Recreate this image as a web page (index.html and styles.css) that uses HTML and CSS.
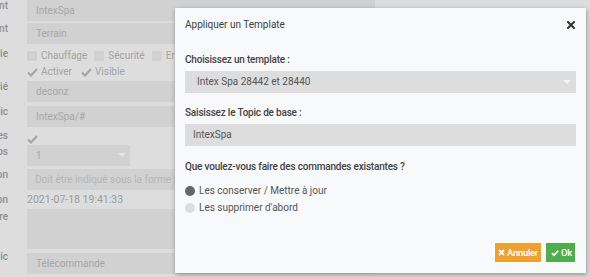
FILE: index.html
```html
<!DOCTYPE html>
<html lang="fr">
<head>
<meta charset="utf-8">
<link rel="stylesheet" href="styles.css">
</head>
<body>
<div class="page">
  <div class="row r-input first">
    <div class="label"><span>Nom de l'équipement</span></div>
    <div class="field input">IntexSpa</div>
  </div>
  <div class="row r-input">
    <div class="label"><span>Objet parent</span></div>
    <div class="field input">Terrain</div>
  </div>
  <div class="row r-check">
    <div class="label"><span>Catégorie</span></div>
    <div class="field checks">
      <span class="cb"></span><span class="cbt">Chauffage</span>
      <span class="cb"></span><span class="cbt">Sécurité</span>
      <span class="cb"></span><span class="cbt">Energie</span>
    </div>
  </div>
  <div class="row r-check2">
    <div class="label"><span></span></div>
    <div class="field checks">
      <svg class="ck" width="11" height="9" viewBox="0 0 11 9"><path d="M1 4.5 L4 7.5 L10 1" stroke="#a3a4a3" stroke-width="2" fill="none"/></svg><span class="cbt">Activer</span>
      <svg class="ck" width="11" height="9" viewBox="0 0 11 9"><path d="M1 4.5 L4 7.5 L10 1" stroke="#a3a4a3" stroke-width="2" fill="none"/></svg><span class="cbt">Visible</span>
    </div>
  </div>
  <div class="row r-input r5">
    <div class="label"><span>Broker associé</span></div>
    <div class="field input">deconz</div>
  </div>
  <div class="row r-input r6">
    <div class="label"><span>Topic</span></div>
    <div class="field input">IntexSpa/#</div>
  </div>
  <div class="row r-check3">
    <div class="label"><span>Auto-découverte des commandes</span></div>
    <div class="field checks"><svg class="ck" width="11" height="9" viewBox="0 0 11 9"><path d="M1 4.5 L4 7.5 L10 1" stroke="#a3a4a3" stroke-width="2" fill="none"/></svg></div>
  </div>
  <div class="row r-input r8">
    <div class="label"><span>Qos</span></div>
    <div class="field input select">1<span class="arrow"></span></div>
  </div>
  <div class="row r-input r9">
    <div class="label"><span>Format de publication</span></div>
    <div class="field input ph">Doit être indiqué sous la forme : JSON</div>
  </div>
  <div class="row r-date">
    <div class="label"><span>Dernière communication</span></div>
    <div class="field date">2021-07-18 19:41:33</div>
  </div>
  <div class="row r-area">
    <div class="label"><span>Commentaire</span></div>
    <div class="field area"></div>
  </div>
  <div class="row r-input r12">
    <div class="label"><span>Type de topic</span></div>
    <div class="field input">Télécommande</div>
  </div>
</div>

<div class="modal">
  <div class="m-head">
    <span class="m-title">Appliquer un Template</span>
    <svg class="m-close" width="8" height="8" viewBox="0 0 8 8"><path d="M1 1 L7 7 M7 1 L1 7" stroke="#333" stroke-width="2" stroke-linecap="square"/></svg>
  </div>
  <div class="m-body">
    <div class="m-label l1">Choisissez un template :</div>
    <div class="m-select">Intex Spa 28442 et 28440<span class="m-arrow"></span></div>
    <div class="m-label l2">Saisissez le Topic de base :</div>
    <div class="m-input">IntexSpa</div>
    <div class="m-label l3">Que voulez-vous faire des commandes existantes ?</div>
    <div class="radios">
      <div class="radio"><span class="dot on"></span>Les conserver / Mettre à jour</div>
      <div class="radio"><span class="dot"></span>Les supprimer d'abord</div>
    </div>
  </div>
  <div class="m-foot">
    <span class="btn warn"><svg width="7" height="7" viewBox="0 0 7 7"><path d="M1 1 L6 6 M6 1 L1 6" stroke="#fff" stroke-width="1.8"/></svg><span>Annuler</span></span>
    <span class="btn ok"><svg width="9" height="8" viewBox="0 0 9 8"><path d="M1 4.2 L3.4 6.5 L8 1.5" stroke="#fff" stroke-width="1.9" fill="none"/></svg><span>Ok</span></span>
  </div>
</div>
</body>
</html>
```

FILE: styles.css
```css
html, body {
  margin: 0;
  padding: 0;
}
body {
  width: 590px;
  height: 277px;
  overflow: hidden;
  background: #dcdddc;
  font-family: Roboto, "Liberation Sans", sans-serif;
  position: relative;
}
.page {
  display: flex;
  flex-direction: column;
  width: 375px;
}
.row {
  display: flex;
  align-items: flex-start;
}
.label {
  width: 8px;
  flex: none;
  display: flex;
  justify-content: flex-end;
  overflow: hidden;
  white-space: nowrap;
  font-size: 10px;
  line-height: 12px;
  color: #8e8f8e;
  margin-right: 19px;
  font-weight: 500;
}
.label span { flex: none; }
.field {
  flex: 1;
  font-size: 10px;
  color: #a6a7a6;
}
.input {
  height: 21px;
  line-height: 21px;
  background: #d1d1d1;
  padding-left: 9px;
  position: relative;
}
.r-input .label { margin-top: 0; }
.row + .r-input { margin-top: 2px; }
.r-check { margin-top: 5px; height: 14px; }
.r-check .label { margin-top: -1px; }
.r-check2 { margin-top: 2px; height: 14px; }
.checks {
  display: flex;
  align-items: center;
  height: 14px;
  line-height: 14px;
  color: #a3a4a3;
  font-size: 10px;
}
.cb {
  width: 10px;
  height: 10px;
  background: #d1d1d1;
  margin-right: 4px;
}
.cbt { margin-right: 7px; }
.ck {
  margin-right: 3px;
}
.r-check2 .cbt { margin-right: 9px; }
.r5 { margin-top: 2px !important; }
.r6 { margin-top: 4px !important; }
.r-check3 { margin-top: 5px; height: 12px; }
.r-check3 .label { margin-top: -2px; }
.r8 { margin-top: 1px !important; }
.r8 .label { margin-top: 1px !important; }
.select {
  flex: none;
  width: 94px;
  padding-left: 9px;
}
.arrow {
  position: absolute;
  left: 91px;
  top: 8px;
  border-left: 4px solid transparent;
  border-right: 4px solid transparent;
  border-top: 4px solid #e6e6e6;
}
.r9 { margin-top: 3px !important; }
.ph { color: #b6b7b6; padding-left: 8px; }
.r-date { margin-top: 2px; height: 16px; }
.date { line-height: 16px; color: #9a9b9a; padding-left: 0; font-size: 10.5px; }
.r-date .label { margin-top: 2px; }
.r-area { margin-top: 1px; }
.r-area .label { margin-top: 2px; }
.area { height: 40px; background: #d1d1d1; }
.r12 { margin-top: 4px !important; }
.r12 .label { margin-top: -2px !important; }

/* modal */
.modal {
  position: absolute;
  left: 175px;
  top: 8px;
  width: 411px;
  height: 265px;
  background: #f8f9fa;
  box-shadow: 0 1px 4px rgba(0,0,0,0.25), 2px 3px 6px rgba(0,0,0,0.12);
  display: flex;
  flex-direction: column;
  box-sizing: border-box;
  padding: 0 10px 10px 10px;
  color: #444;
}
.m-head {
  display: flex;
  justify-content: space-between;
  align-items: center;
  margin-top: 11px;
  height: 12px;
}
.m-title {
  font-size: 10px;
  line-height: 12px;
  color: #3e3e3e;
}
.m-close { margin-right: 1px; }
.m-body {
  display: flex;
  flex-direction: column;
}
.m-label {
  font-size: 10px;
  line-height: 12px;
  font-weight: 500;
  color: #444;
  letter-spacing: -0.2px;
}
.l1 { margin-top: 23px; margin-bottom: 5px; }
.l2 { margin-top: 14px; margin-bottom: 5px; }
.l3 { margin-top: 15px; }
.m-select, .m-input {
  height: 22px;
  line-height: 22px;
  background: #dddddd;
  font-size: 10px;
  color: #555;
  position: relative;
}
.m-select { padding-left: 12px; }
.m-input { padding-left: 8px; }
.m-arrow {
  position: absolute;
  right: 5px;
  top: 9px;
  border-left: 4px solid transparent;
  border-right: 4px solid transparent;
  border-top: 4px solid #f4f4f4;
}
.radios {
  margin-top: 9px;
  display: flex;
  flex-direction: column;
}
.radio {
  display: flex;
  align-items: center;
  height: 17px;
  line-height: 17px;
  font-size: 10px;
  color: #555;
}
.dot {
  width: 10px;
  height: 10px;
  border-radius: 50%;
  background: #dddddd;
  margin-right: 4px;
}
.dot.on { background: #666; }
.m-foot {
  margin-top: auto;
  display: flex;
  justify-content: flex-end;
  gap: 3px;
}
.btn {
  height: 21px;
  box-sizing: border-box;
  display: flex;
  align-items: center;
  gap: 2px;
  font-size: 9.5px;
  color: #fff;
  font-weight: 500;
  padding: 0 3px;
  border: 1px solid #fff;
  letter-spacing: -0.3px;
}
.btn.warn { background: #f0a030; width: 48px; }
.btn.ok { background: #4cae4c; width: 31px; padding-left: 5px; }
```
